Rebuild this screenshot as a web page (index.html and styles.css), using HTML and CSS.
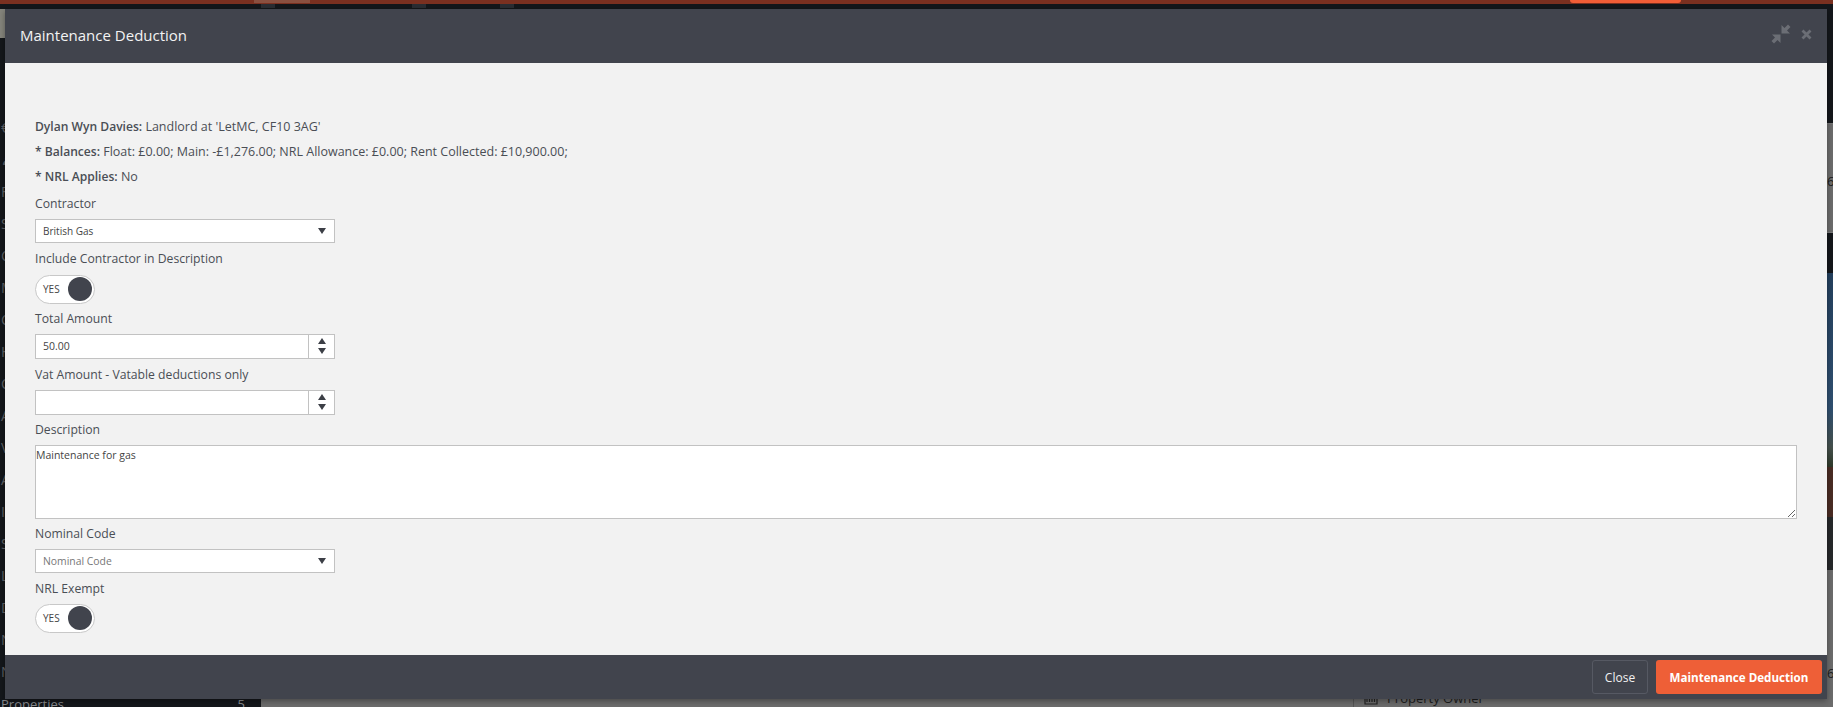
FILE: index.html
```html
<!DOCTYPE html>
<html lang="en">
<head>
<meta charset="utf-8">
<title>Maintenance Deduction</title>
<link rel="stylesheet" href="styles.css">
</head>
<body>
<div class="app">
  <div class="topbar"><span class="top-light"></span><span class="top-btn"></span></div>
  <div class="subbar"><span class="sub-tab"></span><span class="sub-tab sub-b"></span><span class="sub-tab sub-c"></span></div>
  <div class="workspace">
    <nav class="sidebar">
      <div class="logo-stub"></div>
      <div class="side-row">€ Money</div>
      <div class="side-row">♟ People</div>
      <div class="side-row">Float</div>
      <div class="side-row">Sales</div>
      <div class="side-row">Clients</div>
      <div class="side-row">Maintenance</div>
      <div class="side-row">Contractors</div>
      <div class="side-row">History</div>
      <div class="side-row">Contacts</div>
      <div class="side-row">Accounts</div>
      <div class="side-row">Viewings</div>
      <div class="side-row">Applicants</div>
      <div class="side-row">Inspections</div>
      <div class="side-row">Safety</div>
      <div class="side-row">Landlords</div>
      <div class="side-row">Deposits</div>
      <div class="side-row">Notices</div>
      <div class="side-row">Notes</div>
      <div class="side-row side-last"><span>Properties</span><span>5</span></div>
    </nav>
    <main class="main">
      <div class="owner"><span class="owner-icon"><svg viewBox="0 0 14 14" width="14" height="14"><path d="M1 13V3h12v10zM3 5v6M5.500 5v6M8 5v6M10.500 5v6" fill="none" stroke="#222" stroke-width="1.200"/></svg></span><span>Property Owner</span></div>
      <aside class="edge">
        <div class="edge-dark edge-a"></div>
        <div class="edge-gray edge-b">6</div>
        <div class="edge-dark edge-c"></div>
        <div class="edge-photo"></div>
        <div class="edge-brown"></div>
        <div class="edge-dark edge-d"></div>
        <div class="edge-gray edge-e">6</div>
      </aside>
    </main>
  </div>
</div>

<section class="modal">
  <header class="modal-head">
    <h1 class="modal-title">Maintenance Deduction</h1>
    <div class="modal-tools">
      <svg class="tool-compress" viewBox="0 0 20 20" width="20" height="20"><path d="M19.500 3 17 .5 13.500 4 10.500 1V9.500H19L16 6.500zM.5 17 3 19.500 6.500 16 9.500 19V10.500H1L4 13.500z" fill="#6b6e75"/></svg>
      <svg class="tool-close" viewBox="0 0 11 11" width="11" height="11"><path d="M1.500 1.500 9.500 9.500M9.500 1.500 1.500 9.500" stroke="#6b6e75" stroke-width="2.800" fill="none"/></svg>
    </div>
  </header>
  <form class="modal-body">
    <p class="info"><b>Dylan Wyn Davies:</b> Landlord at 'LetMC, CF10 3AG'</p>
    <p class="info"><b>* Balances:</b> Float: £0.00; Main: -£1,276.00; NRL Allowance: £0.00; Rent Collected: £10,900.00;</p>
    <p class="info"><b>* NRL Applies:</b> No</p>

    <div class="field field-first">
      <label class="label">Contractor</label>
      <div class="select"><span>British Gas</span><i class="caret"></i></div>
    </div>
    <div class="field">
      <label class="label">Include Contractor in Description</label>
      <div class="toggle toggle-low"><span>YES</span><i class="knob"></i></div>
    </div>
    <div class="field">
      <label class="label">Total Amount</label>
      <div class="number"><input class="number-input" type="text" value="50.00"><span class="spin"><i class="up"></i><i class="down"></i></span></div>
    </div>
    <div class="field">
      <label class="label">Vat Amount - Vatable deductions only</label>
      <div class="number"><input class="number-input" type="text" value=""><span class="spin"><i class="up"></i><i class="down"></i></span></div>
    </div>
    <div class="field field-tight">
      <label class="label">Description</label>
      <textarea class="area">Maintenance for gas</textarea>
    </div>
    <div class="field field-tight">
      <label class="label">Nominal Code</label>
      <div class="select placeholder"><span>Nominal Code</span><i class="caret"></i></div>
    </div>
    <div class="field">
      <label class="label">NRL Exempt</label>
      <div class="toggle"><span>YES</span><i class="knob"></i></div>
    </div>
  </form>
  <footer class="modal-foot">
    <button class="btn btn-close" type="button">Close</button>
    <button class="btn btn-primary" type="button">Maintenance Deduction</button>
  </footer>
</section>
</body>
</html>
```
FILE: styles.css
```css
* { box-sizing: border-box; }
html, body { margin: 0; height: 100%; overflow: hidden; }
body { background: #14171b; font-family: "Open Sans", "Liberation Sans", sans-serif; font-size: 12.2px; color: #4a4e55; }

.app { height: 707px; display: flex; flex-direction: column; overflow: hidden; }
.topbar { height: 4px; background: #7a3020; position: relative; flex: none; }
.top-light { position: absolute; left: 254px; top: 0; width: 56px; height: 3px; background: #8a5040; }
.top-btn { position: absolute; left: 1570px; top: 0; width: 111px; height: 3px; background: #f15d36; border-radius: 0 0 14px 14px; }
.subbar { height: 5px; background: #14171b; flex: none; display: flex; padding-left: 261px; }
.sub-tab { width: 14px; height: 4px; background: #2a2d33; }
.sub-b { margin-left: 137px; }
.sub-c { margin-left: 74px; }
.workspace { flex: 1; display: flex; min-height: 0; }
.sidebar { width: 261px; flex: none; background: #14171b; color: #5f6165; font-size: 14px; display: flex; flex-direction: column; }
.logo-stub { height: 29px; background: #85857c; margin-bottom: 74px; flex: none; width: 100%; }
.side-row { height: 32px; flex: none; line-height: 32px; white-space: nowrap; padding-left: 1px; }
.side-last { display: flex; justify-content: space-between; padding-right: 16px; color: #8a8c90; font-size: 13px; }
.main { flex: 1; background: #6c6c6c; display: flex; justify-content: flex-end; position: relative; }
.edge { width: 6px; flex: none; display: flex; flex-direction: column; color: #1d1d1d; font-size: 13px; overflow: hidden; }
.edge-dark { background: #14171b; flex: none; }
.edge-a { height: 114px; }
.edge-b { height: 110px; background: #6c6c6c; padding-top: 48px; border-top: 1px solid #777; border-bottom: 1px solid #7c7c7c; }
.edge-c { height: 40px; }
.edge-photo { height: 194px; background: linear-gradient(#24405e, #2f4f70 70%, #45504c 90%, #2f3a2a); flex: none; }
.edge-brown { height: 50px; background: #4a2c24; flex: none; }
.edge-d { height: 53px; background: #26282a; }
.edge-e { flex: 1; background: #6c6c6c; padding-top: 94px; }
.edge-gray { overflow: hidden; line-height: 18px; flex-shrink: 0; }

.owner { position: absolute; left: 1092px; top: 676px; display: flex; align-items: center; gap: 9px; font-size: 13px; color: #1d1d1d; height: 26px; padding-left: 10px; border-left: 1px solid #555; white-space: nowrap; }
.owner-icon { display: flex; }

.modal { position: fixed; left: 5px; top: 9px; width: 1822px; height: 690px; display: flex; flex-direction: column; box-shadow: 0 2px 6px rgba(0,0,0,.35); }
.modal-head { height: 54px; flex: none; background: #41444d; display: flex; align-items: center; justify-content: space-between; padding: 0 15px; }
.modal-title { margin: 0 0 2px; font-size: 15px; font-weight: 400; color: #f3f3f3; }
.modal-tools { display: flex; align-items: center; gap: 10px; padding-bottom: 4px; }
.tool-compress, .tool-close { display: block; }

.modal-body { flex: 1; background: #f2f2f2; padding: 54px 30px 0; min-height: 0; }
.info { margin: 0 0 5px; line-height: 20px; height: 20px; font-size: 12.500px; white-space: nowrap; }
.info b { font-weight: 600; font-size: 12.100px; }
.field { padding-top: 5px; }
.field-first { padding-top: 1.500px; }
.field-tight { padding-top: 4px; }
.label { display: block; line-height: 20px; height: 20px; margin-bottom: 5px; }

.select { width: 300px; height: 24px; margin-bottom: 1px; background: #fff; border: 1px solid #c2c2c2; display: flex; align-items: center; justify-content: space-between; padding: 0 8px 0 7px; font-size: 10px; color: #444; }
.placeholder { color: #777; font-size: 10.400px; }
.caret { width: 0; height: 0; border-left: 4px solid transparent; border-right: 4px solid transparent; border-top: 6px solid #3c3f46; margin-top: 1px; }

.toggle { width: 60px; height: 29px; background: #fff; border: 1px solid #c8c8c8; border-radius: 15px; display: flex; align-items: center; justify-content: space-between; padding: 0 1px 0 7px; font-size: 10px; color: #444; }
.toggle-low { margin-top: 6px; }
.knob { width: 24px; height: 24px; border-radius: 50%; background: #41444d; margin-right: 1px; }

.number { width: 300px; height: 25px; margin-bottom: 1px; display: flex; background: #fff; border: 1px solid #c2c2c2; }
.number-input { flex: 1; min-width: 0; border: 0; outline: 0; background: transparent; padding: 0 0 0 7px; font-family: inherit; font-size: 10.500px; color: #444; }
.spin { width: 26px; flex: none; border-left: 1px solid #c2c2c2; display: flex; flex-direction: column; align-items: center; justify-content: center; gap: 4px; }
.up, .down { width: 0; height: 0; border-left: 4px solid transparent; border-right: 4px solid transparent; }
.up { border-bottom: 6px solid #3c3f46; }
.down { border-top: 6px solid #3c3f46; }

.area { display: block; width: 1762px; height: 74px; margin-bottom: 1px; background: #fff; border: 1px solid #c2c2c2; border-radius: 0; padding: 2px 0 0 0; font-family: inherit; font-size: 10.500px; color: #444; outline: 0; }

.modal-foot { height: 44px; flex: none; background: #41444d; display: flex; justify-content: flex-end; align-items: flex-start; gap: 8px; padding: 5px 5px 0 0; }
.btn { height: 34px; font-family: inherit; font-size: 12px; border-radius: 3px; cursor: pointer; padding: 0; }
.btn-close { width: 56px; background: transparent; color: #f1f1f1; border: 1px solid #565963; }
.btn-primary { width: 166px; background: #ee5f37; color: #fff; border: 0; font-weight: 700; font-size: 11.600px; }
```
